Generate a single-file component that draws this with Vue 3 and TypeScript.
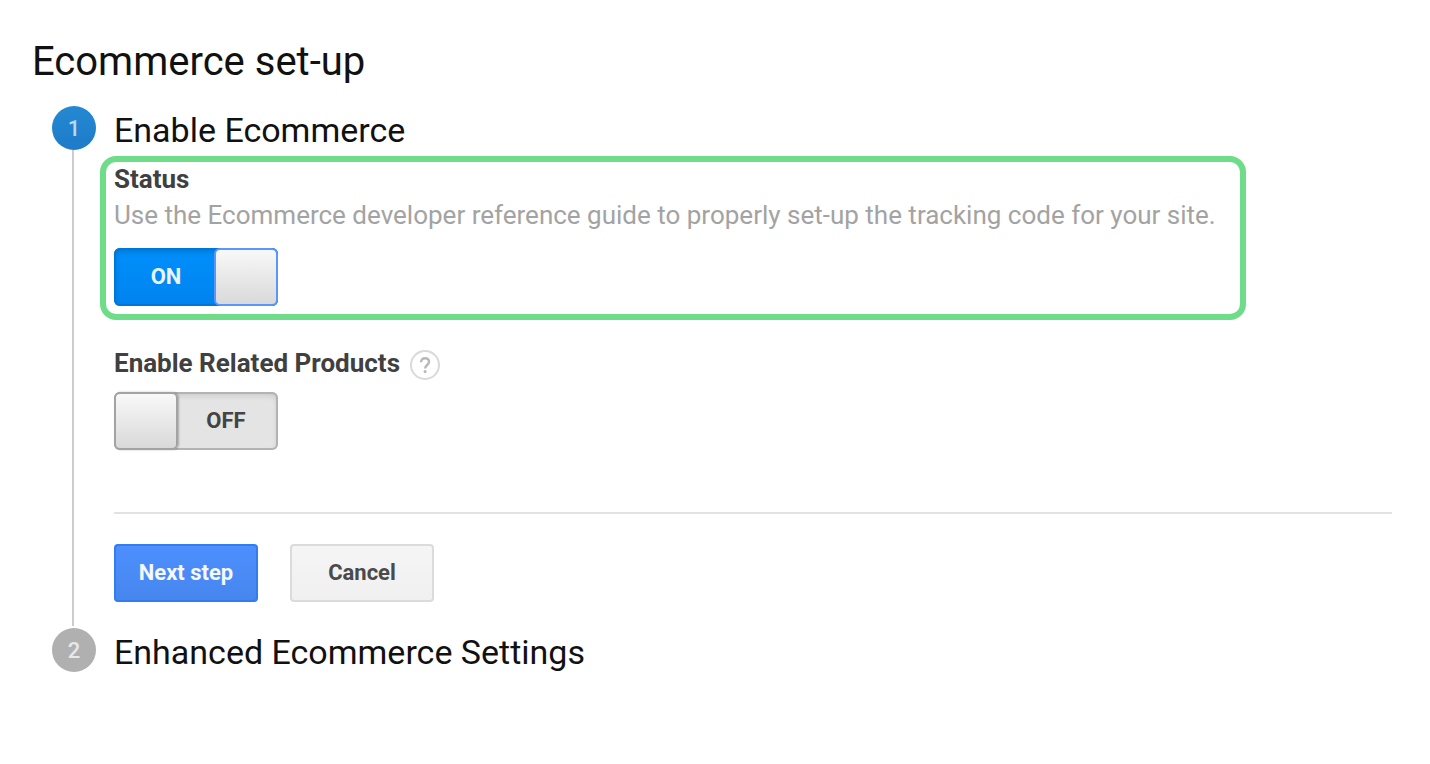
<script setup lang="ts">
import { ref } from 'vue'

const tracking = ref(true)
const related = ref(false)
</script>

<template>
  <main class="page">
    <h1>Ecommerce set-up</h1>
    <ol class="steps">
      <li class="step">
        <div class="rail">
          <span class="marker active">1</span>
          <span class="line"></span>
        </div>
        <section class="body">
          <h2>Enable Ecommerce</h2>
          <div class="highlight">
            <h3 id="status-label">Status</h3>
            <p>Use the Ecommerce developer reference guide to properly set-up the tracking code for your site.</p>
            <label class="toggle" :class="{ on: tracking }">
              <input v-model="tracking" type="checkbox" role="switch" aria-labelledby="status-label" />
              <span class="state">{{ tracking ? 'ON' : 'OFF' }}</span>
              <span class="knob"></span>
            </label>
          </div>
          <div class="related">
            <div class="related-head">
              <h3 id="related-label">Enable Related Products</h3>
              <button type="button" class="help" aria-label="About related products">
                <svg viewBox="0 0 30 30" width="30" height="30" aria-hidden="true">
                  <circle cx="15" cy="15" r="14" fill="#fff" stroke="#d9d9d9" stroke-width="2" />
                  <path d="M11 12.2c0-2.5 1.6-4 4-4s4 1.4 4 3.6c0 3.2-3.9 3.2-3.9 6.8" fill="none" stroke="#b8b8b8" stroke-width="2.4" />
                  <circle cx="15.1" cy="21.6" r="1.5" fill="#b8b8b8" />
                </svg>
              </button>
            </div>
            <label class="toggle" :class="{ on: related }">
              <input v-model="related" type="checkbox" role="switch" aria-labelledby="related-label" />
              <span class="state">{{ related ? 'ON' : 'OFF' }}</span>
              <span class="knob"></span>
            </label>
          </div>
          <div class="actions">
            <button type="button" class="btn primary">Next step</button>
            <button type="button" class="btn">Cancel</button>
          </div>
        </section>
      </li>
      <li class="step">
        <div class="rail">
          <span class="marker">2</span>
        </div>
        <section class="body">
          <h2>Enhanced Ecommerce Settings</h2>
        </section>
      </li>
    </ol>
  </main>
</template>

<style>
body {
  margin: 0;
  background: #fff;
}
</style>

<style scoped>
.page {
  padding: 38px 38px 40px 32px;
  font-family: Roboto, "Liberation Sans", sans-serif;
  color: #111;
}
h1,
h2,
h3,
p {
  margin: 0;
}
h1 {
  font-size: 40px;
  line-height: 48px;
  font-weight: 400;
}
h2 {
  font-size: 34px;
  line-height: 48px;
  font-weight: 400;
}
h3 {
  font-size: 26px;
  line-height: 34px;
  font-weight: 700;
  color: #404040;
}
p {
  font-size: 26px;
  line-height: 38px;
  color: #a3a3a3;
}
.steps {
  list-style: none;
  margin: 20px 0 0;
  padding: 0 0 0 20px;
}
.step {
  display: grid;
  grid-template-columns: 44px minmax(0, 1fr);
  column-gap: 18px;
}
.rail {
  display: flex;
  flex-direction: column;
  align-items: center;
}
.marker {
  display: flex;
  align-items: center;
  justify-content: center;
  width: 44px;
  height: 44px;
  border-radius: 50%;
  background: #b0b0b0;
  color: #e8e8e8;
  font-size: 22px;
  font-weight: 500;
}
.marker.active {
  background: linear-gradient(#2389d2, #1e7bc8);
  color: #b9d9f1;
}
.line {
  flex: 1;
  width: 2px;
  margin: 0 2px 2px 0;
  background: #ccc;
}
.highlight {
  width: fit-content;
  margin: 2px 0 0 -14px;
  padding: 0 24px 8px 8px;
  border: 6px solid #6edc88;
  border-radius: 16px;
}
.toggle {
  position: relative;
  display: flex;
  flex-direction: row-reverse;
  box-sizing: border-box;
  width: 164px;
  height: 58px;
  border-radius: 6px;
  background: #e4e4e4;
  box-shadow: inset 0 0 0 2px #b3b3b3, inset 0 3px 6px rgba(0, 0, 0, 0.14);
  color: #444;
  cursor: pointer;
}
.toggle.on {
  flex-direction: row;
  background: linear-gradient(#0090fc, #0083ee);
  box-shadow: inset 0 0 0 2px #0077d8, inset 0 3px 6px rgba(0, 0, 0, 0.2);
  color: #e9f4ff;
}
.toggle input {
  position: absolute;
  inset: 0;
  width: 100%;
  height: 100%;
  margin: 0;
  opacity: 0;
  cursor: pointer;
}
.state {
  flex: 1;
  padding-right: 4px;
  text-align: center;
  font-size: 22px;
  line-height: 58px;
  font-weight: 700;
}
.toggle.on .state {
  padding: 0 0 0 4px;
}
.knob {
  box-sizing: border-box;
  width: 64px;
  border: 2px solid #a3a3a3;
  border-radius: 6px;
  background: linear-gradient(#f8f8f8, #d9d9d9);
  box-shadow: 1px 0 2px rgba(0, 0, 0, 0.25);
}
.toggle.on .knob {
  border-color: #5c96fa;
  box-shadow: none;
}
.highlight .toggle {
  margin-top: 14px;
}
.related {
  padding: 26px 0 62px;
  border-bottom: 2px solid #e2e2e2;
}
.related-head {
  display: flex;
  align-items: center;
  gap: 10px;
}
.related .toggle {
  margin-top: 12px;
}
.help {
  display: flex;
  margin: 4px 0 0;
  padding: 0;
  border: 0;
  background: none;
  cursor: pointer;
}
.actions {
  display: flex;
  gap: 32px;
  padding: 30px 0 26px;
}
.btn {
  min-width: 144px;
  height: 58px;
  padding: 0 16px 2px;
  border: 2px solid #dbdbdb;
  border-radius: 4px;
  background: linear-gradient(#f5f5f5, #f0f0f0);
  color: #4a4a4a;
  font-family: inherit;
  font-size: 22px;
  font-weight: 700;
  cursor: pointer;
}
.btn.primary {
  border-color: #327cf2;
  background: linear-gradient(#4c8ffd, #4786ee);
  color: #f4f8ff;
}
</style>
